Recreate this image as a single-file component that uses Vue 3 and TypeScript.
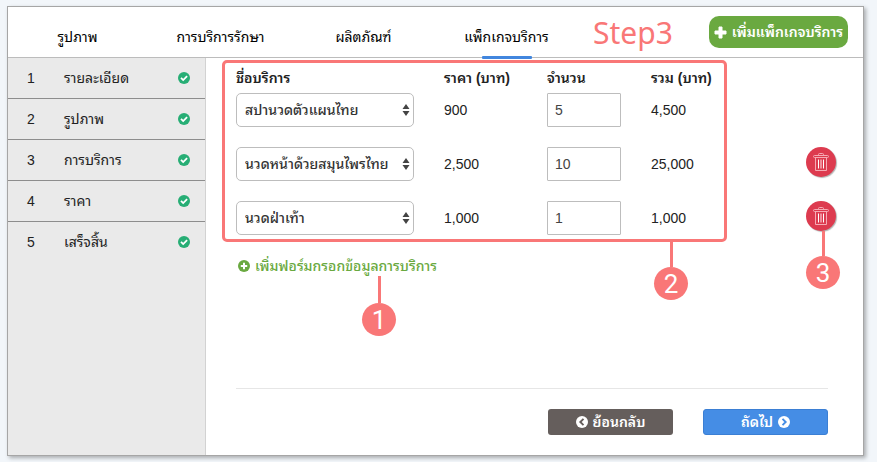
<script setup lang="ts">
import { ref } from 'vue'

interface ServiceRow {
  id: number
  service: string
  price: number
  quantity: number
  removable: boolean
}

const tabs = ['รูปภาพ', 'การบริการรักษา', 'ผลิตภัณฑ์', 'แพ็กเกจบริการ']
const activeTab = ref(3)
const steps = ['รายละเอียด', 'รูปภาพ', 'การบริการ', 'ราคา', 'เสร็จสิ้น']
const services = ['สปานวดตัวแผนไทย', 'นวดหน้าด้วยสมุนไพรไทย', 'นวดฝ่าเท้า']

const rows = ref<ServiceRow[]>([
  { id: 1, service: services[0], price: 900, quantity: 5, removable: false },
  { id: 2, service: services[1], price: 2500, quantity: 10, removable: true },
  { id: 3, service: services[2], price: 1000, quantity: 1, removable: true },
])

const format = (value: number): string => value.toLocaleString('en-US')

function addRow(): void {
  rows.value.push({ id: Date.now(), service: services[0], price: 900, quantity: 1, removable: true })
}

function removeRow(id: number): void {
  rows.value = rows.value.filter((row) => row.id !== id)
}
</script>

<template>
  <div class="window">
    <header class="topbar">
      <nav class="tabs">
        <a
          v-for="(tab, i) in tabs"
          :key="tab"
          href="#"
          class="tab"
          :class="{ active: i === activeTab }"
          @click.prevent="activeTab = i"
        >{{ tab }}</a>
      </nav>
      <span class="step-title">Step3</span>
      <button type="button" class="add-package">
        <svg class="icon-plus" viewBox="0 0 13 13"><path d="M5 1h3v4h4v3H8v4H5V8H1V5h4z" fill="#fff" stroke="#fff" stroke-linejoin="round" /></svg>
        <span>เพิ่มแพ็กเกจบริการ</span>
      </button>
    </header>

    <div class="body">
      <aside class="sidebar">
        <ol class="steps">
          <li v-for="(step, i) in steps" :key="step" class="step">
            <span class="step-number">{{ i + 1 }}</span>
            <span class="step-name">{{ step }}</span>
            <svg class="icon" viewBox="0 0 12 12">
              <circle cx="6" cy="6" r="6" fill="#27ae75" />
              <path d="M3 5.900l2.200 2.200L9.100 4.200" fill="none" stroke="#fff" stroke-width="1.800" />
            </svg>
          </li>
        </ol>
      </aside>

      <main class="content">
        <div class="form-area">
          <table class="services">
            <thead>
              <tr>
                <th class="col-name">ชื่อบริการ</th>
                <th class="col-price">ราคา (บาท)</th>
                <th class="col-quantity">จำนวน</th>
                <th class="col-total">รวม (บาท)</th>
                <td class="col-action"></td>
              </tr>
            </thead>
            <tbody>
              <tr v-for="row in rows" :key="row.id">
                <td>
                  <div class="select-box">
                    <select v-model="row.service" aria-label="ชื่อบริการ">
                      <option v-for="s in services" :key="s" :value="s">{{ s }}</option>
                    </select>
                    <svg class="arrows" viewBox="0 0 8 14"><path d="M4 1l3.500 5h-7zM4 13l3.500-5h-7z" fill="#444" /></svg>
                  </div>
                </td>
                <td>{{ format(row.price) }}</td>
                <td><input v-model.number="row.quantity" class="quantity" type="text" aria-label="จำนวน" /></td>
                <td>{{ format(row.price * row.quantity) }}</td>
                <td class="action">
                  <button v-if="row.removable" type="button" class="remove" aria-label="ลบ" @click="removeRow(row.id)">
                    <svg class="icon-trash" viewBox="0 0 16 18" fill="none" stroke="#f5abb4">
                      <path d="M5.500 2.500v-1q0-1 1-1h3q1 0 1 1v1" />
                      <rect x="0.500" y="2.500" width="15" height="2" rx="1" />
                      <path d="M2.500 4.500v13h11v-13" />
                      <path d="M5.500 6.500v9M10.500 6.500v9" stroke="#fff" />
                      <path d="M8 6.500v9" stroke-width="2" stroke="#f08e9a" />
                    </svg>
                  </button>
                </td>
              </tr>
            </tbody>
          </table>
          <div class="highlight"></div>
          <div class="marker marker-two"><span>2</span></div>
          <div class="marker marker-three"><span>3</span></div>
        </div>

        <div class="add-area">
          <button type="button" class="add-row" @click="addRow">
            <svg class="icon" viewBox="0 0 12 12">
              <circle cx="6" cy="6" r="6" fill="#6aa940" />
              <path d="M6 2.800v6.400M2.800 6h6.400" stroke="#fff" stroke-width="2" />
            </svg>
            <span>เพิ่มฟอร์มกรอกข้อมูลการบริการ</span>
          </button>
          <div class="marker marker-one"><span>1</span></div>
        </div>

        <footer class="actions">
          <button type="button" class="nav-button back">
            <svg class="icon" viewBox="0 0 12 12">
              <circle cx="6" cy="6" r="6" fill="#fff" />
              <path d="M7.500 2.800L4.300 6l3.200 3.200" fill="none" stroke="#655e5c" stroke-width="1.900" />
            </svg>
            <span>ย้อนกลับ</span>
          </button>
          <button type="button" class="nav-button next">
            <span>ถัดไป</span>
            <svg class="icon" viewBox="0 0 12 12">
              <circle cx="6" cy="6" r="6" fill="#fff" />
              <path d="M4.500 2.800L7.700 6 4.500 9.200" fill="none" stroke="#458de5" stroke-width="1.900" />
            </svg>
          </button>
        </footer>
      </main>
    </div>
  </div>
</template>

<style>
body {
  background: #f2f6fa;
}
#app {
  display: flex;
  min-height: 100vh;
}
</style>

<style scoped>
* {
  box-sizing: border-box;
}
.window {
  flex: 1;
  display: flex;
  flex-direction: column;
  margin: 6px 13px 6px 7px;
  border: 1px solid #a6a6a6;
  background: #fff;
  box-shadow: 2px 2px 4px rgba(0, 0, 0, 0.3);
  color: #222;
  font-family: "Liberation Sans", Thonburi, "Noto Sans Thai Looped", Loma, "Noto Sans Thai", "Noto Sans", sans-serif;
  font-size: 14px;
  line-height: 20px;
}
button,
input,
select {
  font: inherit;
}
button {
  padding: 0;
  border: 0;
  background: none;
  cursor: pointer;
}
.icon {
  flex: none;
  width: 12px;
  height: 12px;
}
.topbar {
  display: flex;
  height: 51px;
  padding-right: 15px;
  border-bottom: 1px solid #bcbcbc;
}
.tabs {
  display: flex;
  margin-left: -2px;
}
.tab {
  position: relative;
  width: 143px;
  padding-top: 20px;
  color: #000;
  text-align: center;
  text-decoration: none;
}
.tab.active::after {
  content: "";
  position: absolute;
  bottom: -2px;
  left: 50%;
  width: 50px;
  height: 3px;
  margin-left: -25px;
  border-radius: 1px;
  background: #4186de;
}
.step-title {
  margin-left: 15px;
  padding-top: 6px;
  color: #f97777;
  font-family: "Noto Sans", sans-serif;
  font-size: 30px;
  line-height: 40px;
}
.add-package {
  display: flex;
  align-items: center;
  justify-content: center;
  gap: 5px;
  width: 139px;
  height: 32px;
  margin: 9px 0 0 auto;
  border-radius: 10px;
  background: #6aa940;
  color: #fff;
  font-weight: 600;
  white-space: nowrap;
}
.icon-plus {
  flex: none;
  width: 13px;
  height: 13px;
}
.body {
  flex: 1;
  display: flex;
}
.sidebar {
  flex: none;
  width: 198px;
  border-right: 1px solid #d2d2d2;
  background: #eaeaea;
}
.steps {
  margin: 0;
  padding: 0;
  list-style: none;
}
.step {
  display: flex;
  align-items: center;
  height: 40px;
  padding: 0 15px 0 19px;
}
.step + .step {
  height: 41px;
  border-top: 1px solid #8d8d8d;
}
.step-number {
  width: 37px;
}
.step-name {
  flex: 1;
}
.content {
  flex: 1;
  display: flex;
  flex-direction: column;
  padding: 8px 27px 20px 30px;
}
.form-area {
  position: relative;
}
.services {
  width: 100%;
  table-layout: fixed;
  border-collapse: collapse;
}
.services th {
  height: 27px;
  padding: 2px 0 5px;
  font-weight: 600;
  text-align: left;
}
.services td {
  padding: 0;
}
.services tbody td {
  height: 54px;
  padding-bottom: 20px;
}
.col-name {
  width: 208px;
}
.col-price {
  width: 103px;
}
.col-quantity {
  width: 104px;
}
.col-action {
  width: 30px;
}
.select-box {
  position: relative;
  width: 178px;
}
select {
  display: block;
  width: 100%;
  height: 34px;
  padding: 0 18px 0 8px;
  border: 1px solid #bdbdbd;
  border-radius: 5px;
  background: #fff;
  color: #333;
  font-weight: 500;
  appearance: none;
}
.arrows {
  position: absolute;
  top: 10px;
  right: 4px;
  width: 8px;
  height: 14px;
  pointer-events: none;
}
.quantity {
  display: block;
  width: 74px;
  height: 34px;
  padding: 0 7px;
  border: 1px solid #bdbdbd;
  border-radius: 1px;
  color: #444;
}
.remove {
  display: flex;
  align-items: center;
  justify-content: center;
  width: 30px;
  height: 30px;
  margin-bottom: 4px;
  border-radius: 50%;
  background: #dd3b4f;
  box-shadow: 1px 1px 1px rgba(0, 0, 0, 0.3);
}
.icon-trash {
  width: 16px;
  height: 18px;
}
.highlight {
  position: absolute;
  top: -6px;
  left: -14px;
  width: 505px;
  height: 182px;
  border: 3px solid #f97777;
  border-radius: 5px;
  pointer-events: none;
}
.marker {
  position: absolute;
  display: flex;
  flex-direction: column;
  align-items: center;
  color: #fff;
  font-family: Roboto, sans-serif;
  font-size: 26px;
  line-height: 34px;
  pointer-events: none;
}
.marker::before {
  content: "";
  width: 3px;
  height: 25px;
  background: #f97777;
}
.marker span {
  width: 34px;
  height: 33px;
  border-radius: 50%;
  background: #f97777;
  text-align: center;
}
.marker-one {
  top: 20px;
  left: 126px;
}
.marker-one::before {
  height: 27px;
}
.marker-two {
  top: 176px;
  left: 418px;
}
.marker-three {
  top: 165px;
  right: -4px;
}
.add-area {
  position: relative;
  margin-top: 1px;
}
.add-row {
  display: flex;
  align-items: center;
  gap: 5px;
  margin-left: 2px;
  color: #6aa940;
  font-weight: 500;
}
.actions {
  display: flex;
  justify-content: flex-end;
  gap: 30px;
  margin: auto 8px 0 0;
  padding-top: 20px;
  border-top: 1px solid #e6e6e6;
}
.nav-button {
  display: flex;
  align-items: center;
  justify-content: center;
  gap: 5px;
  width: 125px;
  height: 26px;
  border-radius: 3px;
  color: #fff;
  font-weight: 600;
}
.back {
  background: #655e5c;
}
.next {
  border: 1px solid #3b7fd4;
  background: #458de5;
}
</style>
